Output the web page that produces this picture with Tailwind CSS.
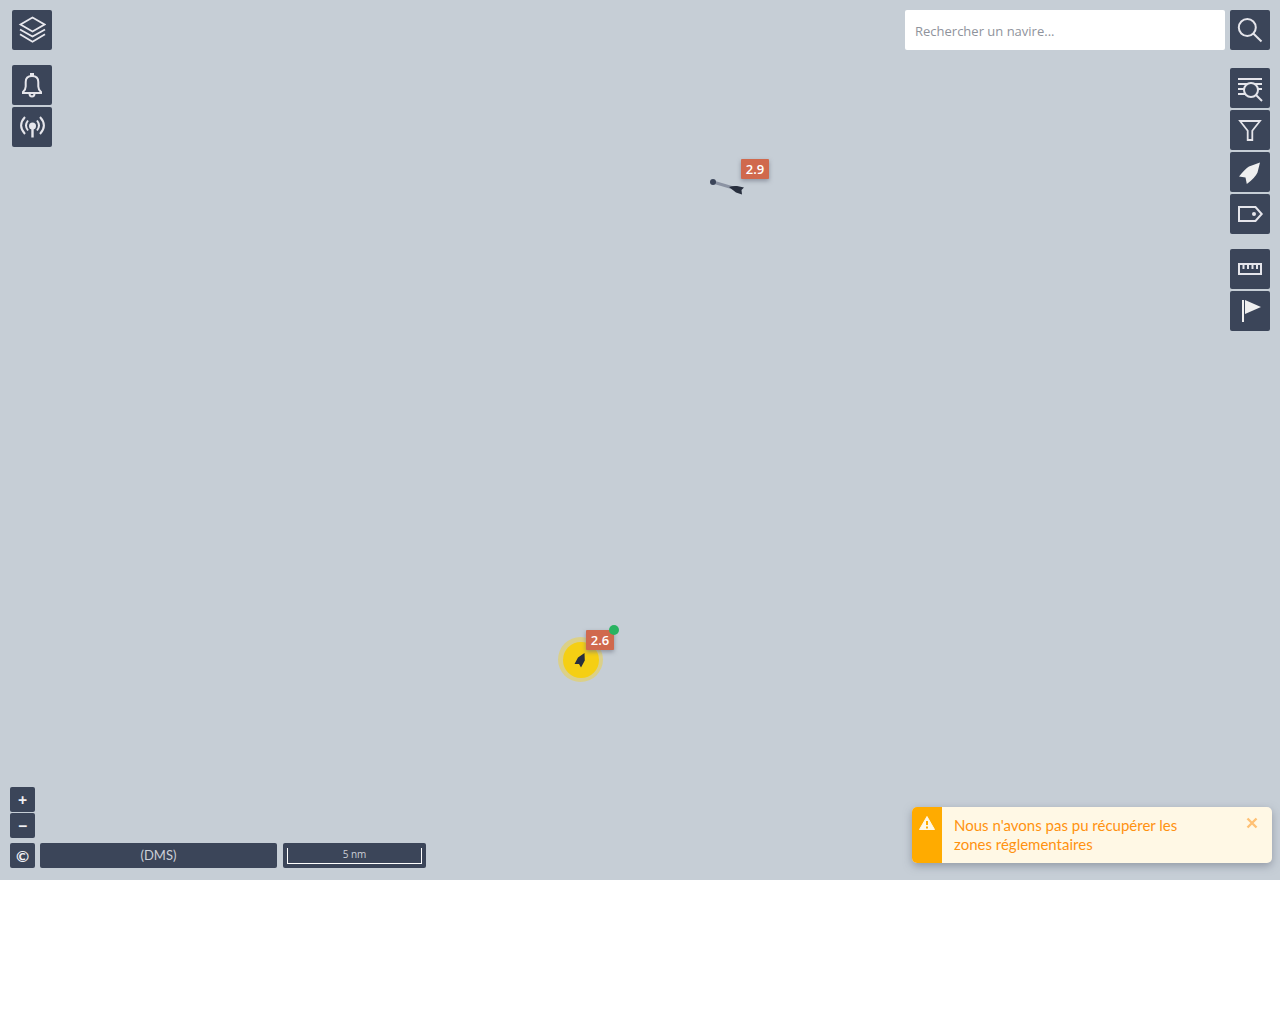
<!DOCTYPE html>
<html lang="fr">
<head>
<meta charset="utf-8">
<title>Carte des navires</title>
<script src="https://cdn.jsdelivr.net/npm/@tailwindcss/browser@4"></script>
</head>
<body class="bg-white font-['Lato','Open_Sans',sans-serif]">
<main class="relative flex h-[calc(100vh-9rem)] min-h-[560px] flex-col justify-between overflow-hidden bg-[#c6ced6]">

  <!-- Vessels -->
  <svg class="absolute left-[708px] top-[176px]" width="40" height="22" viewBox="0 0 40 22" aria-hidden="true">
    <path d="M5 6 27 12.500" stroke="#8b93a3" stroke-width="3"/>
    <circle cx="5" cy="6" r="3" fill="#3b4559"/>
    <path d="M21 11 Q25 9.500 29 10L36 11.500 33.500 14 34 18.500 28 16.500Z" fill="#282f3e"/>
  </svg>
  <div class="absolute left-[741px] top-[159px] flex h-5 w-7 items-center justify-center rounded-[1px] bg-[#d0694d] pt-px font-['Open_Sans',sans-serif] text-[13px] font-semibold text-white shadow-[0_2px_4px_#707785aa]">2.9</div>

  <div class="absolute left-[558px] top-[637px] flex size-[45px] items-center justify-center rounded-full bg-[#dbd088]">
    <div class="flex size-9 items-center justify-center rounded-full bg-[#f5cf13]">
      <svg width="14" height="16" viewBox="0 0 14 16" aria-hidden="true"><path d="M10.500 1 10.800 8.500 7 15.500 5 12 .5 12 4 5.500Z" fill="#282f3e"/></svg>
    </div>
  </div>
  <div class="absolute left-[586px] top-[630px] flex h-5 w-7 items-center justify-center rounded-[1px] bg-[#d0694d] pt-px font-['Open_Sans',sans-serif] text-[13px] font-semibold text-white shadow-[0_2px_4px_#707785aa]">2.6
    <span class="absolute -right-[5px] -top-[5px] size-[10px] rounded-full bg-[#29b361]"></span>
  </div>

  <!-- Top controls -->
  <div class="relative flex items-start justify-between pl-3 pr-[10px] pt-[10px]">
    <div class="flex flex-col gap-[15px]">
      <button aria-label="Couches" class="flex size-10 items-center justify-center rounded-[2px] bg-[#3b4559]">
        <svg width="28" height="28" viewBox="0 0 28 28" fill="none" stroke="#e8e8ee" stroke-width="1.800"><path d="M14.500 1.500 26.500 8.500 14.500 15.500 2.500 8.500ZM2 13.500 14.500 20.500 27 13.500M2 18.300 14.500 25.800 27 18.300"/></svg>
      </button>
      <div class="flex flex-col gap-[2px]">
        <button aria-label="Alertes" class="flex size-10 items-center justify-center rounded-[2px] bg-[#3b4559]">
          <svg width="26" height="28" viewBox="0 0 26 28" fill="none" stroke="#e5e5eb" stroke-width="2"><path d="M4 22V21Q6.700 18.500 6.700 15.500V11Q6.700 5 13 5T19.300 11V15.500Q19.300 18.500 22 21V22Z"/><path d="M13 2V5" stroke-width="4"/><path d="M10.500 22.500Q10.500 25.500 13 25.500T15.500 22.500"/></svg>
        </button>
        <button aria-label="Balises" class="flex size-10 items-center justify-center rounded-[2px] bg-[#3b4559]">
          <svg width="28" height="28" viewBox="0 0 28 28" fill="none" stroke="#e5e5eb" stroke-width="2"><circle cx="14.500" cy="13" r="3.500" fill="#e5e5eb" stroke="none"/><path d="M14.500 13V24.500" stroke-width="2.400"/><path d="M10 7.500Q6 12.500 10 17.500M19 7.500Q23 12.500 19 17.500M7 4Q-.800 12.500 7 21M22 4Q29.800 12.500 22 21"/></svg>
        </button>
      </div>
    </div>

    <div class="flex flex-col items-end gap-[18px]">
      <form class="flex gap-[5px]" role="search">
        <input type="text" aria-label="Rechercher un navire" placeholder="Rechercher un navire..." class="h-10 w-80 rounded-[2px] bg-white px-[10px] pt-[2px] font-['Open_Sans',sans-serif] text-[13px] text-gray-700 outline-none placeholder:text-[#8f939c]">
        <button type="button" aria-label="Rechercher" class="flex size-10 items-center justify-center rounded-[2px] bg-[#3b4559]">
          <svg width="28" height="28" viewBox="0 0 28 28" fill="none" stroke="#e5e5eb" stroke-width="2"><circle cx="11.300" cy="11.500" r="8.500"/><path d="M17.300 17.500 25.500 25.500"/></svg>
        </button>
      </form>
      <div class="flex flex-col gap-[15px]">
        <div class="flex flex-col gap-[2px]">
          <button aria-label="Liste des navires" class="flex size-10 items-center justify-center rounded-[2px] bg-[#3b4559]">
            <svg width="28" height="28" viewBox="0 0 28 28" fill="none" stroke="#e5e5eb" stroke-width="2"><path d="M2 5H26M2 10H26M2 15H9M22 15H26M2 20H10"/><circle cx="15" cy="16" r="7" fill="#3b4559"/><path d="M20 21 26 27"/></svg>
          </button>
          <button aria-label="Filtres" class="flex size-10 items-center justify-center rounded-[2px] bg-[#3b4559]">
            <svg width="28" height="28" viewBox="0 0 28 28" fill="none" stroke="#e5e5eb" stroke-width="1.800"><path d="M4 5H24L16.300 14.800V24H11.700V14.800Z"/></svg>
          </button>
          <button aria-label="Navires" class="flex size-10 items-center justify-center rounded-[2px] bg-[#3b4559]">
            <svg width="28" height="28" viewBox="0 0 28 28" fill="#f0f0f0"><path d="M24 4.500 13 8.500Q9 11 3 18.500L9.500 19.500 10.800 26Q19 20 21.500 14.500Z"/></svg>
          </button>
          <button aria-label="Étiquettes" class="flex size-10 items-center justify-center rounded-[2px] bg-[#3b4559]">
            <svg width="28" height="28" viewBox="0 0 28 28" fill="none" stroke="#e5e5eb" stroke-width="2"><path d="M3 7H19.500L25.700 14 19.500 21H3Z"/><circle cx="18" cy="14" r="2" fill="#e5e5eb" stroke="none"/></svg>
          </button>
        </div>
        <div class="flex flex-col gap-[2px]">
          <button aria-label="Mesurer" class="flex size-10 items-center justify-center rounded-[2px] bg-[#3b4559]">
            <svg width="28" height="28" viewBox="0 0 28 28" fill="none" stroke="#e5e5eb" stroke-width="2"><path d="M3 9H25V19H3ZM7.500 9V14M12 9V14M16.500 9V14M21 9V14"/></svg>
          </button>
          <button aria-label="Points d'intérêt" class="flex size-10 items-center justify-center rounded-[2px] bg-[#3b4559]">
            <svg width="28" height="28" viewBox="0 0 28 28" fill="#f0f0f0"><path d="M6 3H8V25H6ZM9 3 25 10 9 17Z"/></svg>
          </button>
        </div>
      </div>
    </div>
  </div>

  <!-- Bottom controls -->
  <div class="relative flex items-end justify-between pl-[10px] pr-2">
    <div class="flex flex-col gap-[5px] pb-3">
      <div class="flex flex-col gap-px">
        <button aria-label="Zoom avant" class="flex size-[25px] items-center justify-center rounded-[2px] bg-[#3b4559] font-['Open_Sans',sans-serif] text-base font-bold text-[#f0f0f4]">+</button>
        <button aria-label="Zoom arrière" class="flex size-[25px] items-center justify-center rounded-[2px] bg-[#3b4559] font-['Open_Sans',sans-serif] text-base font-bold text-[#f0f0f4]">−</button>
      </div>
      <div class="flex">
        <button aria-label="Crédits" class="mr-[5px] flex size-[25px] items-center justify-center rounded-[2px] bg-[#3b4559] text-base font-bold text-[#f0f0f4]">©</button>
        <button class="mr-[6px] flex h-[25px] w-[237px] items-center justify-center rounded-[2px] bg-[#3b4559] text-[13px] text-[#cccfd7]">(DMS)</button>
        <div class="flex h-[25px] w-[143px] rounded-[2px] bg-[#3b4559] p-1 pt-[5px]">
          <div class="flex w-full items-start justify-center border border-t-0 border-white font-['Open_Sans',sans-serif] text-[10px] leading-3 text-[#cccfd7]">5 nm</div>
        </div>
      </div>
    </div>

    <div role="alert" class="mb-[17px] flex h-14 w-[360px] overflow-hidden rounded-[5px] bg-[#fff8e5] shadow-[0_3px_8px_#70778599]">
      <div class="flex w-[30px] justify-center bg-[#ffab00] pt-2">
        <svg width="18" height="16" viewBox="0 0 18 16"><path d="M9 1.500 16.500 14.500H1.500Z" fill="#fff8e5" stroke="#fff8e5" stroke-linejoin="round"/><path d="M8 6H10V10H8ZM8 11.500H10V13.500H8Z" fill="#ffab00"/></svg>
      </div>
      <p class="flex-1 pl-3 pt-[9px] text-[15px] leading-[19px] text-[#ff9210]">Nous n'avons pas pu récupérer les<br>zones réglementaires</p>
      <button aria-label="Fermer" class="flex h-8 w-10 items-center justify-center">
        <svg width="12" height="12" viewBox="0 0 12 12" fill="none" stroke="#ffc175" stroke-width="2.400"><path d="M1.500 1.500 10.500 10.500M10.500 1.500 1.500 10.500"/></svg>
      </button>
    </div>
  </div>
</main>
</body>
</html>
